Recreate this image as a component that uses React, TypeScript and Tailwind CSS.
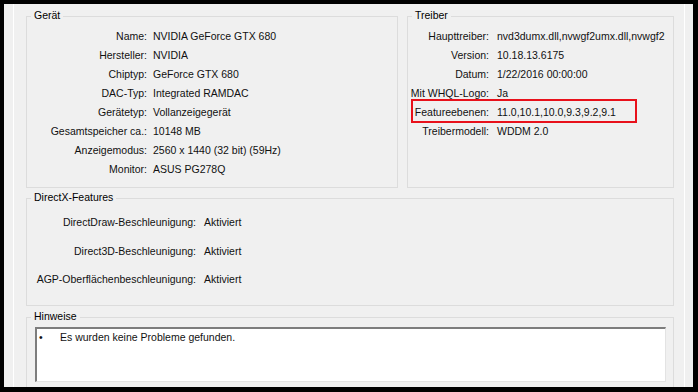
import React from "react";

function Row({ label, value, lw, gap }: { label: string; value: string; lw: string; gap: string }) {
  return (
    <div className="flex h-[19px] items-center whitespace-nowrap">
      <div className={`${lw} shrink-0 text-right`}>{label}</div>
      <div className={`${gap}`}>{value}</div>
    </div>
  );
}

function Title({ children }: { children: React.ReactNode }) {
  return (
    <span className="absolute -top-[8px] left-[4px] bg-[#f0f0f0] px-[3px] leading-[13px] text-[#000]">
      {children}
    </span>
  );
}

export default function App() {
  const geraet: [string, string][] = [
    ["Name:", "NVIDIA GeForce GTX 680"],
    ["Hersteller:", "NVIDIA"],
    ["Chiptyp:", "GeForce GTX 680"],
    ["DAC-Typ:", "Integrated RAMDAC"],
    ["Gerätetyp:", "Vollanzeigegerät"],
    ["Gesamtspeicher ca.:", "10148 MB"],
    ["Anzeigemodus:", "2560 x 1440 (32 bit) (59Hz)"],
    ["Monitor:", "ASUS PG278Q"],
  ];
  const treiber: [string, string][] = [
    ["Haupttreiber:", "nvd3dumx.dll,nvwgf2umx.dll,nvwgf2"],
    ["Version:", "10.18.13.6175"],
    ["Datum:", "1/22/2016 00:00:00"],
    ["Mit WHQL-Logo:", "Ja"],
    ["Featureebenen:", "11.0,10.1,10.0,9.3,9.2,9.1"],
    ["Treibermodell:", "WDDM 2.0"],
  ];
  const dx: [string, string][] = [
    ["DirectDraw-Beschleunigung:", "Aktiviert"],
    ["Direct3D-Beschleunigung:", "Aktiviert"],
    ["AGP-Oberflächenbeschleunigung:", "Aktiviert"],
  ];
  return (
    <div className="w-[698px] h-[392px] bg-black pt-[4px] pl-[4px] font-['Liberation_Sans',Arial,sans-serif] text-[10.5px] text-[#111]">
      <div className="w-[689px] h-[383px] bg-[#f0f0f0] overflow-hidden pl-[9px]">
        <div className="w-[672px] h-[400px] border-x border-white pt-[12px] pl-[12px] pr-[10px]">
          <div className="flex h-[172px] gap-[9px]">
            <div className="relative w-[372px] h-full border border-[#dcdcdc] pt-[10px]">
              <Title>Gerät</Title>
              {geraet.map(([l, v]) => (
                <Row key={l} label={l} value={v} lw="w-[120px]" gap="ml-[6px]" />
              ))}
            </div>
            <div className="relative w-[267px] h-full border border-[#dcdcdc] pt-[10px]">
              <Title>Treiber</Title>
              {treiber.map(([l, v]) => (
                <Row key={l} label={l} value={v} lw="w-[81px]" gap="ml-[8px]" />
              ))}
              <div className="absolute left-[3px] top-[82px] w-[226px] h-[24px] border-2 border-[#e8111b]" />
            </div>
          </div>
          <div className="relative mt-[10px] h-[108px] border border-[#dcdcdc] pt-[14.5px] flex flex-col gap-[9.5px]">
            <Title>DirectX-Features</Title>
            {dx.map(([l, v]) => (
              <Row key={l} label={l} value={v} lw="w-[169px]" gap="ml-[8px]" />
            ))}
          </div>
          <div className="relative mt-[11px] h-[80px] border border-[#dcdcdc] pt-[9px] pl-[8px] pr-[7px]">
            <Title>Hinweise</Title>
            <div className="h-[55px] bg-white border-t-2 border-l-2 border-t-[#7d7d7d] border-l-[#7d7d7d] border-r border-b border-r-[#e3e3e3] border-b-[#e3e3e3] pl-[2px]">
              <div className="flex leading-[16px]">
                <span className="w-[21px]">•</span>
                <span>Es wurden keine Probleme gefunden.</span>
              </div>
            </div>
          </div>
        </div>
      </div>
    </div>
  );
}
